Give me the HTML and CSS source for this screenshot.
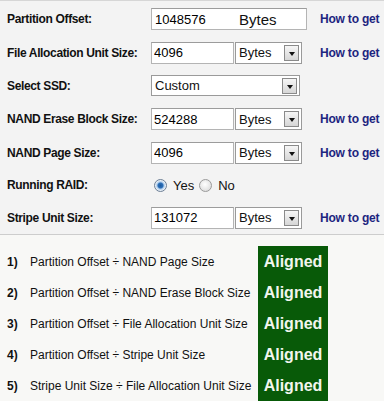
FILE: index.html
```html
<!DOCTYPE html>
<html lang="en">
<head>
    <meta charset="UTF-8">
    <meta name="viewport" content="width=device-width, initial-scale=1.0">
    <title>SSD Alignment Calculator</title>
    <link rel="stylesheet" href="styles.css">
</head>
<body>
    <div class="calc">
        <div class="form">
            <label class="form-label" for="offset">Partition Offset:</label>
            <div class="wide-box">
                <input type="text" id="offset" class="bare" value="1048576">
                <span class="wide-unit">Bytes</span>
            </div>
            <a class="help" href="#">How to get</a>

            <label class="form-label" for="cluster">File Allocation Unit Size:</label>
            <div class="field">
                <input type="text" id="cluster" class="num" value="4096">
                <span class="select unit"><select><option>Bytes</option></select></span>
            </div>
            <a class="help" href="#">How to get</a>

            <label class="form-label" for="ssd">Select SSD:</label>
            <div class="field">
                <span class="select ssd"><select id="ssd"><option>Custom</option></select></span>
            </div>
            <span></span>

            <label class="form-label" for="erase">NAND Erase Block Size:</label>
            <div class="field">
                <input type="text" id="erase" class="num" value="524288">
                <span class="select unit"><select><option>Bytes</option></select></span>
            </div>
            <a class="help" href="#">How to get</a>

            <label class="form-label" for="page">NAND Page Size:</label>
            <div class="field">
                <input type="text" id="page" class="num" value="4096">
                <span class="select unit"><select><option>Bytes</option></select></span>
            </div>
            <a class="help" href="#">How to get</a>

            <span class="form-label">Running RAID:</span>
            <div class="field radios">
                <span class="radio checked"></span><span class="radio-text">Yes</span>
                <span class="radio"></span><span class="radio-text">No</span>
            </div>
            <span></span>

            <label class="form-label" for="stripe">Stripe Unit Size:</label>
            <div class="field">
                <input type="text" id="stripe" class="num" value="131072">
                <span class="select unit"><select><option>Bytes</option></select></span>
            </div>
            <a class="help" href="#">How to get</a>
        </div>

        <div class="results">
            <span class="res-num">1)</span>
            <span class="res-text">Partition Offset ÷ NAND Page Size</span>
            <span class="res-status">Aligned</span>

            <span class="res-num">2)</span>
            <span class="res-text">Partition Offset ÷ NAND Erase Block Size</span>
            <span class="res-status">Aligned</span>

            <span class="res-num">3)</span>
            <span class="res-text">Partition Offset ÷ File Allocation Unit Size</span>
            <span class="res-status">Aligned</span>

            <span class="res-num">4)</span>
            <span class="res-text">Partition Offset ÷ Stripe Unit Size</span>
            <span class="res-status">Aligned</span>

            <span class="res-num">5)</span>
            <span class="res-text">Stripe Unit Size ÷ File Allocation Unit Size</span>
            <span class="res-status">Aligned</span>
        </div>
    </div>
</body>
</html>
```

FILE: styles.css
```css
body {
    margin: 0;
    background-color: #f8f8f6;
    font-family: "Liberation Sans", Arial, sans-serif;
    color: #111;
}
.calc {
    border-top: 1px solid #d6d6d6;
}
.form {
    display: grid;
    grid-template-columns: 144px 169px 64px;
    grid-template-rows: 34px 33px 33px 34px 33px 32px 33px;
    align-items: center;
    padding: 1px 0 0 7px;
    background-color: #f3f3f3;
    border-bottom: 1px solid #cdcdcd;
}
.form-label {
    font-size: 12px;
    font-weight: bold;
    letter-spacing: -0.35px;
}
.help {
    font-size: 12px;
    font-weight: bold;
    letter-spacing: -0.2px;
    color: #1d2580;
    text-decoration: none;
}
.field {
    display: flex;
    align-items: center;
}
.wide-box {
    display: flex;
    align-items: center;
    width: 156px;
    height: 22px;
    box-sizing: border-box;
    border: 1px solid #b4b4b4;
    border-top-color: #9c9c9c;
    background: #fff;
}
.bare {
    width: 84px;
    border: none;
    padding: 0 0 0 3px;
    font: 13px "Liberation Sans", Arial, sans-serif;
    background: transparent;
    outline: none;
}
.wide-unit {
    font-size: 15px;
}
.num {
    width: 83px;
    height: 22px;
    box-sizing: border-box;
    border: 1px solid #b4b4b4;
    border-top-color: #9c9c9c;
    padding: 0 2px;
    font: 13px "Liberation Sans", Arial, sans-serif;
    background: #fff;
    outline: none;
}
.select {
    position: relative;
    display: inline-block;
}
.select select {
    appearance: none;
    -webkit-appearance: none;
    height: 22px;
    box-sizing: border-box;
    border: 1px solid #9a9a9a;
    border-radius: 0;
    padding: 0 3px;
    font: 13px "Liberation Sans", Arial, sans-serif;
    color: #111;
    background: #fff;
}
.select::after {
    content: "";
    position: absolute;
    top: 3px;
    right: 3px;
    width: 13px;
    height: 14px;
    border: 1px solid #8a8a8a;
    background: linear-gradient(#f6f6f6, #d6d6d6);
}
.select::before {
    content: "";
    position: absolute;
    top: 10px;
    right: 7px;
    border-left: 3px solid transparent;
    border-right: 3px solid transparent;
    border-top: 4px solid #111;
    z-index: 1;
}
.unit {
    margin-left: 1px;
}
.unit select {
    width: 67px;
}
.ssd select {
    width: 149px;
    height: 21px;
}
.radios {
    padding-left: 3px;
    font-size: 13px;
}
.radio {
    width: 11px;
    height: 11px;
    border-radius: 50%;
    border: 1px solid #9a9a9a;
    background: radial-gradient(circle at 45% 40%, #ffffff, #d4d4d4);
}
.radio.checked {
    border-color: #6d7f95;
    background: radial-gradient(circle, #1b5aa0 0, #2c6fb8 2.5px, #a9c9ea 3.5px, #e6eef6 5px);
}
.radio-text {
    margin: 0 5px 0 6px;
}
.results {
    display: grid;
    grid-template-columns: 23px 228px 70px;
    grid-auto-rows: 31px;
    align-items: center;
    padding: 11px 0 1px 7px;
}
.res-num {
    font-size: 12px;
    font-weight: bold;
}
.res-text {
    font-size: 12px;
}
.res-status {
    align-self: stretch;
    display: flex;
    align-items: center;
    justify-content: center;
    background-color: #085a08;
    color: #f2f6ee;
    font-size: 16px;
    font-weight: bold;
}
.results .res-status:last-child {
    margin-bottom: -1px;
}
```
